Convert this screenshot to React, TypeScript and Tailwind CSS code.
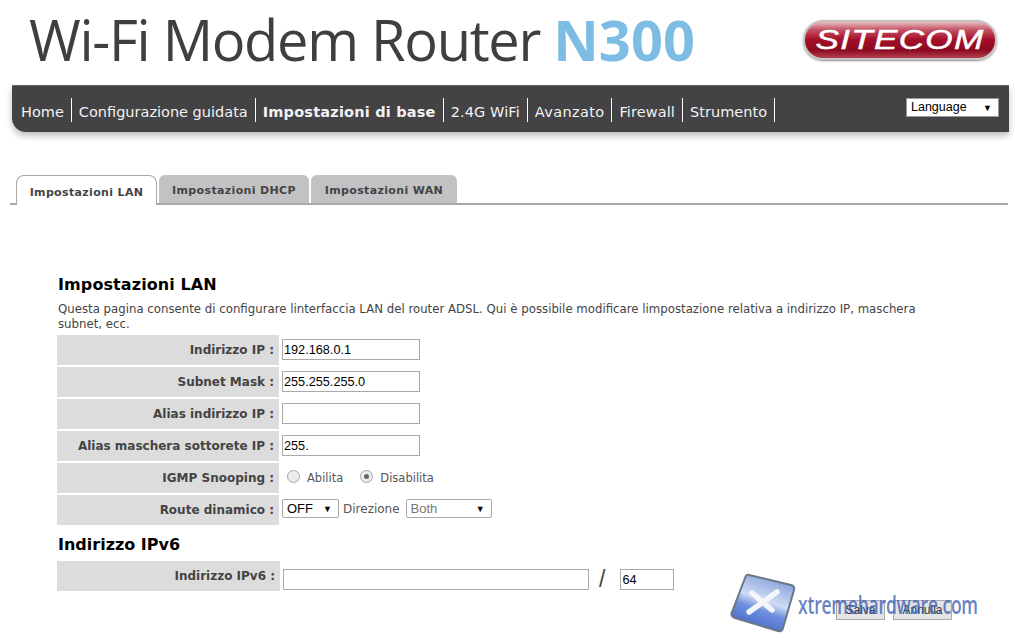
import React from 'react';

const sans = "font-['DejaVu_Sans',Verdana,sans-serif]";
const NAV = [
  { label: 'Home', cls: '' },
  { label: 'Configurazione guidata', cls: '' },
  { label: 'Impostazioni di base', cls: 'font-bold tracking-[0.2px]' },
  { label: '2.4G WiFi', cls: 'tracking-[0.1px]' },
  { label: 'Avanzato', cls: 'tracking-[0.35px]' },
  { label: 'Firewall', cls: 'tracking-[0.1px]' },
  { label: 'Strumento', cls: 'tracking-[0.05px]' },
];
const TABS = ['Impostazioni LAN', 'Impostazioni DHCP', 'Impostazioni WAN'];

const Row = ({ label, children, wide }: { label: string; children: React.ReactNode; wide?: boolean }) => (
  <div className="flex h-[32px]">
    <div className={`${wide ? 'w-[223px]' : 'w-[222px]'} h-[30px] bg-[#dcdcdc] flex items-center justify-end pr-[5px] text-[12px] font-bold text-[#444444] ${sans}`}>
      {label}
    </div>
    <div className="flex items-start pt-[4px] pl-[3px] text-[12px] text-[#555555]">{children}</div>
  </div>
);

const Field = ({ value, className }: { value: string; className: string }) => (
  <input
    readOnly
    value={value}
    className={`h-[21px] border border-[#a9a9a9] bg-white px-[1px] text-[12.7px] text-black font-['Liberation_Sans',Arial,sans-serif] outline-none ${className}`}
  />
);

const Select = ({ value, className, muted }: { value: string; className: string; muted?: boolean }) => (
  <div className={`relative h-[19px] border border-[#a9a9a9] rounded-[2px] bg-white flex items-center pl-[4px] text-[13px] font-['Liberation_Sans',Arial,sans-serif] ${muted ? 'text-[#777777]' : 'text-black'} ${className}`}>
    {value}
    <span className="absolute right-[6px] top-[3px] text-[9px] text-black">▼</span>
  </div>
);

const Radio = ({ checked, label }: { checked?: boolean; label: string }) => (
  <label className="flex items-center">
    <span className="w-[13px] h-[13px] -mt-[2px] rounded-full border border-[#a6a6a6] bg-[#ececec] flex items-center justify-center">
      {checked && <span className="w-[5px] h-[5px] rounded-full bg-[#666666]" />}
    </span>
    <span className="ml-[7px] mt-[2px] text-[11.5px] text-[#555555]">{label}</span>
  </label>
);

const SitecomLogo = () => (
  <div className="w-[194px] h-[40px] rounded-full border-2 border-[#c9c2c2] bg-[linear-gradient(#e7bcc2_0%,#c65868_20%,#a50f2a_48%,#8c0a20_78%,#b3404f_100%)] shadow-[0_1px_2px_rgba(0,0,0,0.45)] flex items-center justify-center">
    <span className="text-white italic text-[27px] leading-none tracking-[1px] scale-x-[1.3] [-webkit-text-stroke:0.5px_white] font-['Liberation_Sans',Arial,sans-serif]">
      SITECOM
    </span>
  </div>
);

const Watermark = () => (
  <div className="absolute left-[729px] top-[572px] flex items-center pointer-events-none">
    <svg width="68" height="64" viewBox="0 0 68 64">
      <defs>
        <linearGradient id="tile" x1="0.7" y1="0" x2="0.3" y2="1">
          <stop offset="0" stopColor="#7f9ad8" />
          <stop offset="0.45" stopColor="#cfdcf4" />
          <stop offset="0.62" stopColor="#6f90de" />
          <stop offset="1" stopColor="#3f63c8" />
        </linearGradient>
      </defs>
      <path d="M20 3 L62 13 Q66 14 65 18 L54 56 Q53 60 49 59 L6 46 Q1 44 3 40 L16 6 Q17 2 20 3 Z" fill="url(#tile)" stroke="#6b7688" strokeWidth="2" />
      <path d="M23 21 L43 38 M20 40 L48 20" stroke="#f4f6fb" strokeWidth="5.5" strokeLinecap="round" />
    </svg>
    <span className="ml-[1px] mt-[1px] text-[25px] leading-none tracking-[-0.3px] font-semibold scale-x-[0.7] origin-left text-[#3f62b5]/80 font-['Open_Sans',sans-serif]">
      xtremehardware.com
    </span>
  </div>
);

export default function App() {
  return (
    <div className={`relative w-[1015px] h-[638px] overflow-hidden bg-white ${sans}`}>
      <header className="h-[85px] flex items-start justify-between">
        <h1 className="ml-[29px] mt-[3px] text-[56px] leading-[72px] tracking-[-1.3px] text-[#3f3f41] font-['Open_Sans',sans-serif] whitespace-nowrap">
          Wi-Fi Modem Router <span className="font-bold tracking-[0px] text-[#7dbde3]">N300</span>
        </h1>
        <div className="mt-[20px] mr-[18px]">
          <SitecomLogo />
        </div>
      </header>

      <nav className="ml-[12px] w-[997px] h-[47px] bg-[#434244] border-t border-[#666666] rounded-bl-[14px] shadow-[0_4px_6px_rgba(0,0,0,0.25)] flex items-start justify-between">
        <ul className="flex mt-[12px] ml-[2px]">
          {NAV.map(item => (
            <li
              key={item.label}
              className={`h-[24px] pl-[7px] pr-[7px] pt-[5px] border-r border-white flex items-center text-[14.5px] text-[#f2f2f2] whitespace-nowrap ${item.cls}`}
            >
              {item.label}
            </li>
          ))}
        </ul>
        <div className="relative mt-[12px] mr-[10px] w-[93px] h-[19px] bg-white border border-[#9a9a9a] flex items-center pl-[4px] text-[12.5px] text-black font-['Liberation_Sans',Arial,sans-serif]">
          Language
          <span className="absolute right-[6px] top-[3px] text-[9px]">▼</span>
        </div>
      </nav>

      <div className="mt-[43px] ml-[10px] w-[998px] h-[30px] border-b-2 border-[#a8a8a8] flex items-end pl-[6px]">
        {TABS.map((tab, i) => (
          <div
            key={tab}
            className={
              i === 0
                ? 'relative -mb-[2px] h-[30px] w-[141px] mr-[2px] pt-[5px] bg-white border border-b-0 border-[#a8a8a8] rounded-t-[8px] flex items-center justify-center text-[11px] tracking-[0.35px] font-bold text-[#444444]'
                : `h-[28px] pt-[5px] ${i === 1 ? 'w-[150px] mr-[2px]' : 'w-[146px]'} bg-[#c2c2c4] rounded-t-[6px] flex items-center justify-center text-[11px] tracking-[0.35px] font-bold text-[#444444]`
            }
          >
            {tab}
          </div>
        ))}
      </div>

      <main className="ml-[57px] mt-[70px]">
        <h2 className="ml-[1px] text-[16px] leading-[20px] tracking-[0.1px] font-bold text-black">Impostazioni LAN</h2>
        <p className="ml-[1px] mt-[7px] w-[880px] text-[11.75px] leading-[15px] text-[#444444]">
          Questa pagina consente di configurare linterfaccia LAN del router ADSL. Qui è possibile modificare limpostazione relativa a indirizzo IP, maschera subnet, ecc.
        </p>
        <div className="mt-[3px]">
          <Row label="Indirizzo IP :"><Field value="192.168.0.1" className="w-[138px]" /></Row>
          <Row label="Subnet Mask :"><Field value="255.255.255.0" className="w-[138px]" /></Row>
          <Row label="Alias indirizzo IP :"><Field value="" className="w-[138px]" /></Row>
          <Row label="Alias maschera sottorete IP :"><Field value="255." className="w-[138px]" /></Row>
          <Row label="IGMP Snooping :">
            <div className="flex items-center gap-[17px] ml-[5px] mt-[1px]">
              <Radio label="Abilita" />
              <Radio checked label="Disabilita" />
            </div>
          </Row>
          <Row label="Route dinamico :">
            <div className="flex items-center">
              <Select value="OFF" className="w-[57px]" />
              <span className="ml-[4px] mr-[6px] text-[12px]">Direzione</span>
              <Select value="Both" muted className="w-[86px]" />
            </div>
          </Row>
        </div>
        <h2 className="ml-[1px] mt-[8px] text-[16px] leading-[20px] font-bold text-black">Indirizzo IPv6</h2>
        <div className="mt-[6px]">
          <Row wide label="Indirizzo IPv6 :">
            <div className="flex items-center pt-[3px]">
              <Field value="" className="w-[306px]" />
              <span className="ml-[10px] mr-[15px] text-[23px] leading-none font-light text-[#444444] font-['Liberation_Sans',Arial,sans-serif]">/</span>
              <Field value="64" className="w-[54px]" />
            </div>
          </Row>
        </div>
        <div className="flex gap-[8px] ml-[779px] mt-[7px]">
          <button className="w-[49px] h-[20px] border border-[#a9a9a9] bg-[#e4e4e4] text-[12px] text-[#333333] font-['Liberation_Sans',Arial,sans-serif]">Salva</button>
          <button className="w-[59px] h-[20px] border border-[#a9a9a9] bg-[#e4e4e4] text-[12px] text-[#333333] font-['Liberation_Sans',Arial,sans-serif]">Annulla</button>
        </div>
      </main>

      <Watermark />
    </div>
  );
}
